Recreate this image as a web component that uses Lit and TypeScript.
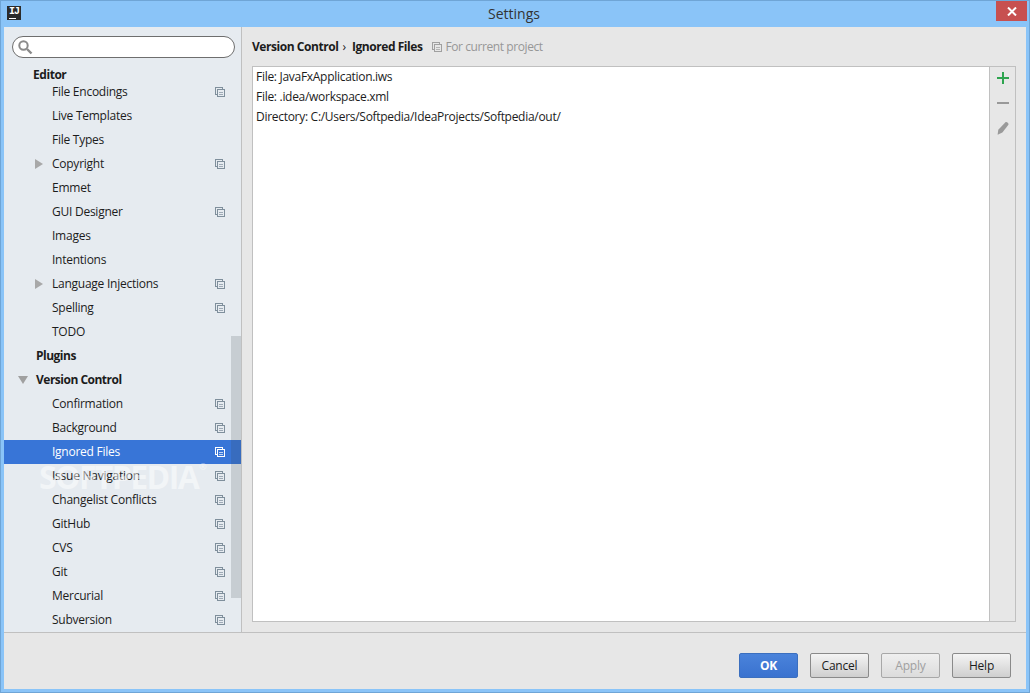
import { LitElement, html, css, svg } from "lit";
import { customElement } from "lit/decorators.js";

type Row = { t: string; k: "top" | "child"; copy?: boolean; arrow?: "r" | "d"; sel?: boolean };

const rows: Row[] = [
  { t: "File Encodings", k: "child", copy: true },
  { t: "Live Templates", k: "child" },
  { t: "File Types", k: "child" },
  { t: "Copyright", k: "child", copy: true, arrow: "r" },
  { t: "Emmet", k: "child" },
  { t: "GUI Designer", k: "child", copy: true },
  { t: "Images", k: "child" },
  { t: "Intentions", k: "child" },
  { t: "Language Injections", k: "child", copy: true, arrow: "r" },
  { t: "Spelling", k: "child", copy: true },
  { t: "TODO", k: "child" },
  { t: "Plugins", k: "top" },
  { t: "Version Control", k: "top", arrow: "d" },
  { t: "Confirmation", k: "child", copy: true },
  { t: "Background", k: "child", copy: true },
  { t: "Ignored Files", k: "child", copy: true, sel: true },
  { t: "Issue Navigation", k: "child", copy: true },
  { t: "Changelist Conflicts", k: "child", copy: true },
  { t: "GitHub", k: "child", copy: true },
  { t: "CVS", k: "child", copy: true },
  { t: "Git", k: "child", copy: true },
  { t: "Mercurial", k: "child", copy: true },
  { t: "Subversion", k: "child", copy: true },
];

const copyIcon = svg`<svg class="copy" width="10" height="10" viewBox="0 0 10 10" fill="none" stroke="currentColor" stroke-width="1" shape-rendering="crispEdges"><path d="M2.5 7.5H.5V.5H7.5V2.5"/><rect x="2.5" y="2.5" width="7" height="7"/><path d="M4 5.5H8M4 7.5H8" opacity=".7"/></svg>`;

@customElement("app-root")
export class AppRoot extends LitElement {
  static styles = css`
    :host { display: block; width: 1030px; height: 693px; overflow: hidden; }
    * { box-sizing: border-box; }
    .win {
      width: 1030px; height: 693px; background: #8ac4f8; display: flex; flex-direction: column;
      border: 1px solid #6fa5d6; position: relative;
      font: 12px/16px "Open Sans", "Noto Sans", sans-serif; color: #1c1c1c; letter-spacing: -0.25px;
    }
    .title { height: 26px; flex: none; display: flex; align-items: flex-start; position: relative; }
    .logo {
      width: 14px; height: 14px; margin: 5px 0 0 6px; flex: none; background: #2b2b2b; color: #fff;
      font: bold 10px/11px "Liberation Mono", monospace; letter-spacing: -1px; text-align: center; position: relative;
    }
    .logo i { position: absolute; left: 2px; bottom: 1px; width: 7px; height: 1px; background: #fff; }
    .caption {
      flex: 1; text-align: center; font-size: 14px; line-height: 26px; color: #333; letter-spacing: 0; padding-right: 22px;
    }
    .close {
      position: absolute; right: 2px; top: 0; width: 31px; height: 20px; background: #c75050;
      display: flex; align-items: center; justify-content: center;
    }
    .body { flex: 1; margin: 0 3px 3px 3px; background: #e7e7e7; display: flex; flex-direction: column; min-height: 0; }
    .main { flex: 1; display: flex; min-height: 0; border-bottom: 1px solid #c0c0c0; }
    .side {
      width: 238px; flex: none; background: #e6ebf0; border-right: 1px solid #c0c0c0; position: relative;
      display: flex; flex-direction: column; overflow: hidden;
    }
    .search {
      margin: 9px 0 0 8px; width: 223px; height: 22px; flex: none; background: #fff; border: 1px solid #6e6e6e;
      border-radius: 11px; display: flex; align-items: center; padding-left: 4px;
    }
    .tree { margin-top: 9px; display: flex; flex-direction: column; position: relative; }
    .editor { height: 12px; line-height: 14px; padding-left: 29px; font-weight: 700; letter-spacing: -0.45px; margin-top: 1px; }
    .row { height: 24px; display: flex; align-items: center; position: relative; padding-left: 48px; }
    .row.top { padding-left: 32px; font-weight: 700; letter-spacing: -0.5px; }
    .row.sel { background: #3875d7; color: #fff; }
    .row .copy { position: absolute; left: 211px; top: 7px; color: #7f8f9c; z-index: 2; }
    .row.sel .copy { color: #fff; }
    .arrow { position: absolute; top: 7px; width: 0; height: 0; }
    .arrow.r { left: 31px; border-left: 8px solid #a8a8a8; border-top: 5px solid transparent; border-bottom: 5px solid transparent; }
    .arrow.d { left: 14px; top: 8px; border-top: 8px solid #a0a0a0; border-left: 5px solid transparent; border-right: 5px solid transparent; }
    .thumb { position: absolute; left: 227px; top: 309px; width: 10px; height: 262px; background: rgba(60, 70, 80, 0.18); z-index: 1; }
    .wm {
      position: absolute; left: 38px; top: 454px; z-index: 3; font: 700 32px/44px "Open Sans", sans-serif;
      color: rgba(255, 255, 255, 0.5); letter-spacing: -1.6px; pointer-events: none; display: flex;
    }
    .wm span { font-size: 9px; line-height: 12px; letter-spacing: 0; margin: 6px 0 0 1px; }
    .content { flex: 1; display: flex; flex-direction: column; padding: 0 10px 10px 10px; min-width: 0; }
    .crumb { height: 39px; flex: none; display: flex; align-items: center; font-weight: 700; letter-spacing: -0.45px; }
    .sep { font-weight: 400; margin: 0 6px 0 4px; font-size: 12px; letter-spacing: 0; }
    .proj { display: flex; align-items: center; font-weight: 400; color: #979797; margin-left: 10px; gap: 3px; letter-spacing: -0.41px; }
    .proj .copy { color: #a0a0a0; }
    .panel { flex: 1; display: flex; border: 1px solid #c0c0c0; min-height: 0; }
    .list { flex: 1; background: #fff; letter-spacing: -0.29px; }
    .item { height: 20px; line-height: 20px; padding-left: 3px; }
    .tools { width: 26px; flex: none; border-left: 1px solid #c0c0c0; display: flex; flex-direction: column; align-items: center; padding-top: 5px; }
    .tools svg { display: block; }
    .minus { margin-top: 13px; }
    .pencil { margin-top: 13px; }
    .foot { height: 56px; flex: none; display: flex; align-items: flex-start; justify-content: flex-end; padding: 20px 15px 0 0; gap: 12px; }
    .btn {
      width: 59px; height: 25px; border: 1px solid #8a8a8a; border-radius: 2px; text-align: center; line-height: 23px;
      background: linear-gradient(#f4f4f4, #cfcfcf); color: #1c1c1c; font-size: 12px; letter-spacing: -0.2px;
    }
    .btn.ok { background: linear-gradient(#4a83db, #3a72cf); border-color: #3b6fbf; color: #fff; font-weight: 700; }
    .btn.dis { background: linear-gradient(#efefef, #dcdcdc); border-color: #a8a8a8; color: #a0a0a0; }
  `;

  render() {
    return html`<div class="win">
      <div class="title">
        <div class="logo">IJ<i></i></div>
        <div class="caption">Settings</div>
        <div class="close">
          <svg width="10" height="9" viewBox="0 0 10 9"><path d="M1 .5 9 8.5M9 .5 1 8.5" stroke="#fff" stroke-width="2" fill="none"/></svg>
        </div>
      </div>
      <div class="body">
        <div class="main">
          <div class="side">
            <div class="search">
              <svg width="16" height="16" viewBox="0 0 16 16" fill="none" stroke="#8a8a8a"><circle cx="6.5" cy="6.5" r="4.2" stroke-width="2"/><path d="M10 10l4.5 4.5" stroke-width="2.4"/></svg>
            </div>
            <div class="tree">
              <div class="editor">Editor</div>
              ${rows.map(
                (r) => html`<div class="row ${r.k} ${r.sel ? "sel" : ""}">
                  ${r.arrow ? html`<span class="arrow ${r.arrow}"></span>` : ""}
                  <span>${r.t}</span>${r.copy ? copyIcon : ""}
                </div>`
              )}
            </div>
            <div class="thumb"></div>
          </div>
          <div class="content">
            <div class="crumb">
              <span>Version Control</span><span class="sep">›</span><span>Ignored Files</span>
              <span class="proj">${copyIcon}<span>For current project</span></span>
            </div>
            <div class="panel">
              <div class="list">
                <div class="item">File: JavaFxApplication.iws</div>
                <div class="item">File: .idea/workspace.xml</div>
                <div class="item">Directory: C:/Users/Softpedia/IdeaProjects/Softpedia/out/</div>
              </div>
              <div class="tools">
                <svg width="12" height="12" viewBox="0 0 12 12"><path d="M6 0v12M0 6h12" stroke="#2ea44f" stroke-width="2"/></svg>
                <svg class="minus" width="12" height="12" viewBox="0 0 12 12"><path d="M0 6h12" stroke="#999" stroke-width="2"/></svg>
                <svg class="pencil" width="12" height="13" viewBox="0 0 12 13"><path d="M8.2.4c1.4-1 3.6.6 3.2 2.3L5.4 10.4.6 12.8l.7-5z" fill="#9a9a9a"/></svg>
              </div>
            </div>
          </div>
        </div>
        <div class="foot">
          <div class="btn ok">OK</div>
          <div class="btn">Cancel</div>
          <div class="btn dis">Apply</div>
          <div class="btn">Help</div>
        </div>
      </div>
      <div class="wm">SOFTPEDIA<span>®</span></div>
    </div>`;
  }
}
